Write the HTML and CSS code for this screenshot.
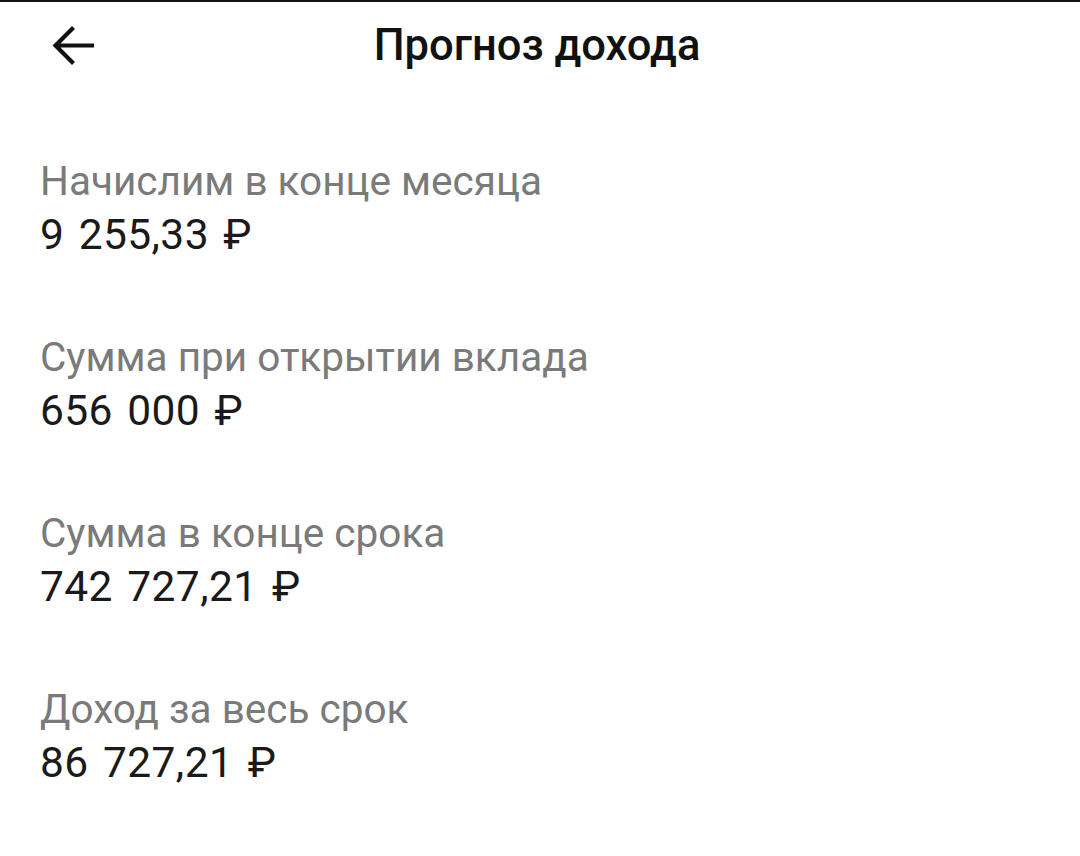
FILE: index.html
```html
<!DOCTYPE html>
<html lang="ru">
<head>
<meta charset="utf-8">
<link rel="stylesheet" href="styles.css">
</head>
<body>
<div class="screen">
  <header class="topbar">
    <div class="back">
      <svg width="44" height="44" viewBox="0 0 44 44" aria-hidden="true">
        <path d="M42 21.5H3.5M21.5 3.5L3.5 21.5L21.5 39.5" fill="none" stroke="#111" stroke-width="4.2"/>
      </svg>
    </div>
    <h1 class="title">Прогноз дохода</h1>
    <div></div>
  </header>
  <main class="list">
    <div class="row">
      <div class="label">Начислим в конце месяца</div>
      <div class="value">9 255,33 ₽</div>
    </div>
    <div class="row">
      <div class="label">Сумма при открытии вклада</div>
      <div class="value">656 000 ₽</div>
    </div>
    <div class="row">
      <div class="label">Сумма в конце срока</div>
      <div class="value">742 727,21 ₽</div>
    </div>
    <div class="row">
      <div class="label">Доход за весь срок</div>
      <div class="value">86 727,21 ₽</div>
    </div>
  </main>
</div>
</body>
</html>
```
FILE: styles.css
```css
html, body {
  margin: 0;
  padding: 0;
  background: #fff;
}
body {
  font-family: Roboto, "Noto Sans", sans-serif;
  color: #111;
}
.screen {
  border-top: 2px solid #141414;
  min-height: 854px;
}
.topbar {
  display: grid;
  grid-template-columns: 1fr auto 1fr;
  align-items: center;
  height: 88px;
}
.back {
  padding-left: 52px;
  display: flex;
  align-items: center;
}
.back svg {
  display: block;
}
.title {
  margin: 0 6px 0 0;
  font-size: 43.5px;
  font-weight: 500;
  line-height: 88px;
  color: #111;
}
.list {
  padding: 64px 0 0 40px;
  display: flex;
  flex-direction: column;
  gap: 68px;
}
.label {
  font-size: 40.5px;
  line-height: 54px;
  color: #7a7a7a;
}
.value {
  font-size: 42.5px;
  line-height: 54px;
  color: #1a1a1a;
  letter-spacing: 0.4px;
  word-spacing: 3.5px;
}
```
